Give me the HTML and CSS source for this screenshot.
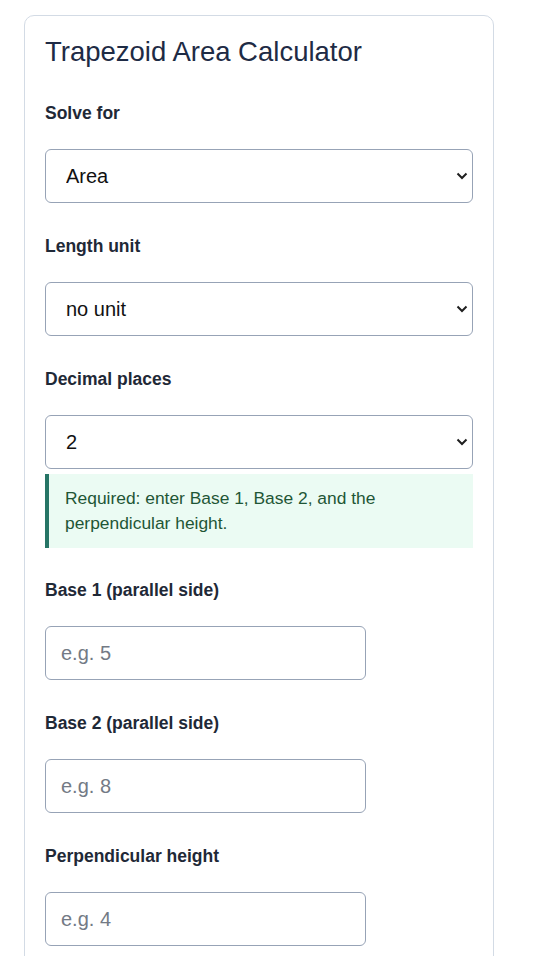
FILE: index.html
```html
<!DOCTYPE html>
<html lang="en">

<head>
  <meta charset="UTF-8">
  <meta name="viewport" content="width=device-width, initial-scale=1.0">
  <title>Trapezoid Area Calculator</title>
  <link rel="stylesheet" href="styles.css">
</head>

<body>
  <div class="calculator">
    <h1 class="calc-title">Trapezoid Area Calculator</h1>

    <div class="field">
      <label for="solveFor">Solve for</label>
      <div class="select-wrap">
        <select id="solveFor" class="control">
          <option value="area">Area</option>
          <option value="base1">Base 1</option>
          <option value="base2">Base 2</option>
          <option value="height">Height</option>
        </select>
        <svg class="chevron" width="12" height="8" viewBox="0 0 12 8"><path d="M1.5 1.5 L6 6 L10.5 1.5" /></svg>
      </div>
    </div>

    <div class="field">
      <label for="lengthUnit">Length unit</label>
      <div class="select-wrap">
        <select id="lengthUnit" class="control">
          <option value="">no unit</option>
          <option value="mm">mm</option>
          <option value="cm">cm</option>
          <option value="m">m</option>
        </select>
        <svg class="chevron" width="12" height="8" viewBox="0 0 12 8"><path d="M1.5 1.5 L6 6 L10.5 1.5" /></svg>
      </div>
    </div>

    <div class="field">
      <label for="decimals">Decimal places</label>
      <div class="select-wrap">
        <select id="decimals" class="control">
          <option>0</option>
          <option>1</option>
          <option selected>2</option>
          <option>3</option>
          <option>4</option>
        </select>
        <svg class="chevron" width="12" height="8" viewBox="0 0 12 8"><path d="M1.5 1.5 L6 6 L10.5 1.5" /></svg>
      </div>
      <div class="hint">Required: enter Base 1, Base 2, and the perpendicular height.</div>
    </div>

    <div class="field">
      <label for="base1">Base 1 (parallel side)</label>
      <input type="number" id="base1" class="control short" placeholder="e.g. 5">
    </div>

    <div class="field">
      <label for="base2">Base 2 (parallel side)</label>
      <input type="number" id="base2" class="control short" placeholder="e.g. 8">
    </div>

    <div class="field">
      <label for="height">Perpendicular height</label>
      <input type="number" id="height" class="control short" placeholder="e.g. 4">
    </div>
  </div>
</body>

</html>
```

FILE: styles.css
```css
* {
  box-sizing: border-box;
}

body {
  margin: 0;
  padding: 15px 24px;
  background: #ffffff;
  font-family: "Liberation Sans", Arial, sans-serif;
  font-size: 17px;
  color: #1f2937;
}

.calculator {
  width: 470px;
  padding: 20px;
  border: 1px solid #d3dbe5;
  border-radius: 10px;
  background: #ffffff;
}

.calc-title {
  margin: 0 0 32px;
  font-size: 27.5px;
  line-height: 32px;
  font-weight: normal;
  color: #1e2b45;
}

.field {
  margin-bottom: 30px;
}

.field label {
  display: block;
  margin-bottom: 24px;
  padding-top: 2px;
  font-size: 17.5px;
  font-weight: bold;
  line-height: 23px;
  color: #1f2937;
}

.select-wrap {
  position: relative;
}

.control {
  display: block;
  width: 100%;
  height: 54px;
  padding: 0 15px;
  border: 1px solid #97a3b6;
  border-radius: 6px;
  background: #ffffff;
  font-family: inherit;
  font-size: 20px;
  color: #111111;
}

select.control {
  appearance: none;
  padding-left: 20px;
}

.chevron {
  position: absolute;
  right: 5px;
  top: 23px;
  pointer-events: none;
  fill: none;
  stroke: #1f1f1f;
  stroke-width: 2;
}

.control.short {
  width: 75%;
}

.control::placeholder {
  color: #737a85;
}

.hint {
  margin-top: 5px;
  margin-bottom: -1px;
  padding: 12px 16px 12px;
  border-left: 4px solid #267566;
  background: #ebfbf3;
  color: #1f5636;
  line-height: 25px;
  font-size: 17.4px;
}
```
